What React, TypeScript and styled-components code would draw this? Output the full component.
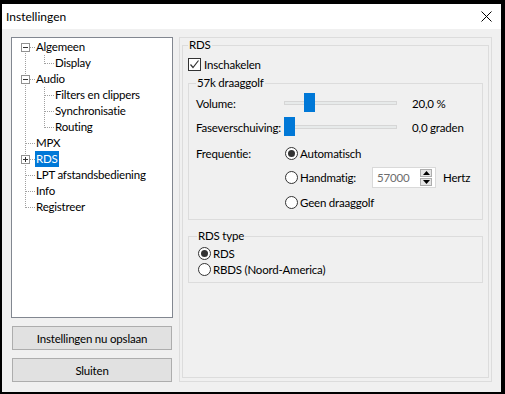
import React from "react";
import styled, { createGlobalStyle } from "styled-components";

const GlobalStyle = createGlobalStyle`
  html, body {
    margin: 0;
    padding: 0;
    background: #000;
  }
  body {
    padding: 4px 4px 2px 2px;
    font-family: Lato, "Noto Sans", sans-serif;
    font-size: 11.5px;
    letter-spacing: -0.2px;
    color: #000;
  }
  * {
    box-sizing: border-box;
  }
`;

const Window = styled.div`
  width: 499px;
  height: 388px;
  background: #f0f0f0;
  display: flex;
  flex-direction: column;
`;

const TitleBar = styled.div`
  height: 25px;
  background: #fff;
  display: flex;
  align-items: center;
  justify-content: space-between;
  padding: 0 9px 0 4px;
  font-size: 12px;
  letter-spacing: 0;
`;

const Body = styled.div`
  flex: 1;
  display: flex;
  gap: 6px;
  padding: 8px 9px 10px 9px;
`;

const LeftColumn = styled.div`
  width: 162px;
  display: flex;
  flex-direction: column;
  gap: 8px;
`;

const TreeBox = styled.div`
  flex: 1;
  background: #fff;
  border: 1px solid #828790;
  padding: 1px 0 0 4px;
`;

const TreeRow = styled.div`
  height: 16px;
  display: flex;
  align-items: center;
  white-space: nowrap;
`;

const TreeLabel = styled.span<{ $selected?: boolean }>`
  height: 16px;
  line-height: 16px;
  padding: 0 1px;
  background: ${(p) => (p.$selected ? "#0078d7" : "transparent")};
  color: ${(p) => (p.$selected ? "#fff" : "#000")};
`;

const Button = styled.button`
  height: 24px;
  margin: 0 1px;
  background: #e1e1e1;
  border: 1px solid #adadad;
  font-family: inherit;
  font-size: inherit;
  letter-spacing: inherit;
  color: #000;
  padding: 0;
`;

const Panel = styled.div`
  flex: 1;
  border: 1px solid #dcdcdc;
  padding: 0 2px 3px 2px;
  display: flex;
  flex-direction: column;
`;

const GroupBox = styled.fieldset<{ $pad?: string; $top?: number }>`
  margin: ${(p) => p.$top ?? 0}px 0 0 0;
  padding: ${(p) => p.$pad ?? "0 5px"};
  border: 1px solid #dcdcdc;
  min-width: 0;
  display: flex;
  flex-direction: column;
`;

const Legend = styled.legend`
  padding: 0 1px;
  line-height: 14px;
  margin-left: 0;
`;

const OuterGroup = styled(GroupBox)`
  flex: 1;
`;

const CheckRow = styled.label`
  height: 16px;
  margin-top: 4px;
  display: flex;
  align-items: center;
  gap: 3px;
`;

const Box = styled.span`
  width: 13px;
  height: 13px;
  border: 1px solid #333;
  background: #fff;
  display: flex;
  align-items: center;
  justify-content: center;
`;

const SliderRow = styled.div<{ $top: number }>`
  height: 20px;
  margin-top: ${(p) => p.$top}px;
  display: flex;
  align-items: center;
`;

const FieldLabel = styled.span`
  width: 88px;
  flex-shrink: 0;
  white-space: nowrap;
`;

const Track = styled.div`
  position: relative;
  width: 113px;
  height: 4px;
  background: #e7eaea;
  border: 1px solid #d6d6d6;
`;

const Thumb = styled.div`
  position: absolute;
  top: -9px;
  width: 11px;
  height: 19px;
  background: #0078d7;
`;

const Value = styled.span`
  margin-left: 15px;
`;

const FreqGrid = styled.div`
  margin-top: 8px;
  display: grid;
  grid-template-columns: 88px auto;
  grid-template-rows: 16px 21px 16px;
  row-gap: 6px;
  align-items: center;
`;

const RadioRow = styled.label<{ $w?: number }>`
  height: 16px;
  display: flex;
  align-items: center;
  gap: 2px;
  white-space: nowrap;
  width: ${(p) => (p.$w ? `${p.$w}px` : "auto")};
  flex-shrink: 0;
`;

const RadioCircle = styled.span<{ $on?: boolean }>`
  width: 13px;
  height: 13px;
  border-radius: 50%;
  border: 1px solid #333;
  background: #fff;
  display: flex;
  align-items: center;
  justify-content: center;
  margin-left: 1px;
  &::after {
    content: "";
    width: 7px;
    height: 7px;
    border-radius: 50%;
    background: ${(p) => (p.$on ? "#333" : "transparent")};
  }
`;

const ManualLine = styled.div`
  display: flex;
  align-items: center;
`;

const SpinBox = styled.div`
  width: 64px;
  height: 21px;
  border: 1px solid #d9d9d9;
  background: #fff;
  display: flex;
  align-items: center;
  justify-content: space-between;
  padding: 0 3px 0 4px;
  color: #6d6d6d;
`;

const SpinButtons = styled.div`
  display: flex;
  flex-direction: column;
  gap: 1px;
`;

const SpinButton = styled.span`
  width: 12px;
  height: 8px;
  background: #e5e5e5;
  border: 1px solid #adadad;
  display: flex;
  align-items: center;
  justify-content: center;
`;

const Unit = styled.span`
  margin-left: 7px;
`;

const RadioList = styled.div`
  margin-top: 2px;
  display: flex;
  flex-direction: column;
`;

type Guide = "pipe" | "tee" | "corner" | "start" | "none";

const GuideCell = ({ kind, box }: { kind: Guide; box?: "minus" | "plus" }) => {
  const dash = "1 1";
  const c = "#a0a0a0";
  return (
    <svg width="19" height="16" style={{ flexShrink: 0 }} shapeRendering="crispEdges">
      {kind === "pipe" && <line x1="9.5" y1="0" x2="9.5" y2="16" stroke={c} strokeDasharray={dash} />}
      {kind === "tee" && <line x1="9.5" y1="0" x2="9.5" y2="16" stroke={c} strokeDasharray={dash} />}
      {kind === "corner" && <line x1="9.5" y1="0" x2="9.5" y2="9" stroke={c} strokeDasharray={dash} />}
      {kind === "start" && <line x1="9.5" y1="8" x2="9.5" y2="16" stroke={c} strokeDasharray={dash} />}
      {kind !== "pipe" && kind !== "none" && (
        <line x1="10" y1="8.5" x2="19" y2="8.5" stroke={c} strokeDasharray={dash} />
      )}
      {box && (
        <>
          <rect x="5.5" y="4.5" width="8" height="8" fill="#fff" stroke="#919191" />
          <line x1="7" y1="8.5" x2="12" y2="8.5" stroke="#333" />
          {box === "plus" && <line x1="9.5" y1="6" x2="9.5" y2="11" stroke="#333" />}
        </>
      )}
    </svg>
  );
};

const treeItems: { guides: Guide[]; box?: "minus" | "plus"; label: string; selected?: boolean }[] = [
  { guides: ["start"], box: "minus", label: "Algemeen" },
  { guides: ["pipe", "corner"], label: "Display" },
  { guides: ["tee"], box: "minus", label: "Audio" },
  { guides: ["pipe", "tee"], label: "Filters en clippers" },
  { guides: ["pipe", "tee"], label: "Synchronisatie" },
  { guides: ["pipe", "corner"], label: "Routing" },
  { guides: ["tee"], label: "MPX" },
  { guides: ["tee"], box: "plus", label: "RDS", selected: true },
  { guides: ["tee"], label: "LPT afstandsbediening" },
  { guides: ["tee"], label: "Info" },
  { guides: ["corner"], label: "Registreer" },
];

const Slider = ({ pos }: { pos: number }) => (
  <Track>
    <Thumb style={{ left: `${pos * 102 - 1}px` }} />
  </Track>
);

const Arrow = ({ up }: { up?: boolean }) => (
  <svg width="7" height="4">
    <polygon points={up ? "0,4 7,4 3.5,0" : "0,0 7,0 3.5,4"} fill="#000" />
  </svg>
);

const App = () => {
  return (
    <>
      <GlobalStyle />
      <Window>
        <TitleBar>
          <span>Instellingen</span>
          <svg width="11" height="11">
            <line x1="0.5" y1="0.5" x2="10.5" y2="10.5" stroke="#000" />
            <line x1="10.5" y1="0.5" x2="0.5" y2="10.5" stroke="#000" />
          </svg>
        </TitleBar>
        <Body>
          <LeftColumn>
            <TreeBox>
              {treeItems.map((item) => (
                <TreeRow key={item.label}>
                  {item.guides.map((g, i) => (
                    <GuideCell key={i} kind={g} box={i === item.guides.length - 1 ? item.box : undefined} />
                  ))}
                  <TreeLabel $selected={item.selected}>{item.label}</TreeLabel>
                </TreeRow>
              ))}
            </TreeBox>
            <Button>Instellingen nu opslaan</Button>
            <Button>Sluiten</Button>
          </LeftColumn>
          <Panel>
            <OuterGroup>
              <Legend>RDS</Legend>
              <CheckRow>
                <Box>
                  <svg width="11" height="11">
                    <polyline points="1.5,5.5 4,8.5 9.5,1.5" fill="none" stroke="#333" strokeWidth="1.2" />
                  </svg>
                </Box>
                Inschakelen
              </CheckRow>
              <GroupBox $top={4} $pad="0 7px 9px 7px">
                <Legend>57k draaggolf</Legend>
                <SliderRow $top={3}>
                  <FieldLabel>Volume:</FieldLabel>
                  <Slider pos={0.2} />
                  <Value>20,0 %</Value>
                </SliderRow>
                <SliderRow $top={4}>
                  <FieldLabel>Faseverschuiving:</FieldLabel>
                  <Slider pos={0} />
                  <Value>0,0 graden</Value>
                </SliderRow>
                <FreqGrid>
                  <FieldLabel>Frequentie:</FieldLabel>
                  <RadioRow>
                    <RadioCircle $on />
                    Automatisch
                  </RadioRow>
                  <span />
                  <ManualLine>
                    <RadioRow $w={88}>
                      <RadioCircle />
                      Handmatig:
                    </RadioRow>
                    <SpinBox>
                      57000
                      <SpinButtons>
                        <SpinButton>
                          <Arrow up />
                        </SpinButton>
                        <SpinButton>
                          <Arrow />
                        </SpinButton>
                      </SpinButtons>
                    </SpinBox>
                    <Unit>Hertz</Unit>
                  </ManualLine>
                  <span />
                  <RadioRow>
                    <RadioCircle />
                    Geen draaggolf
                  </RadioRow>
                </FreqGrid>
              </GroupBox>
              <GroupBox $top={9} $pad="0 8px 5px 8px">
                <Legend>RDS type</Legend>
                <RadioList>
                  <RadioRow>
                    <RadioCircle $on />
                    RDS
                  </RadioRow>
                  <RadioRow>
                    <RadioCircle />
                    RBDS (Noord-America)
                  </RadioRow>
                </RadioList>
              </GroupBox>
            </OuterGroup>
          </Panel>
        </Body>
      </Window>
    </>
  );
};

export default App;
